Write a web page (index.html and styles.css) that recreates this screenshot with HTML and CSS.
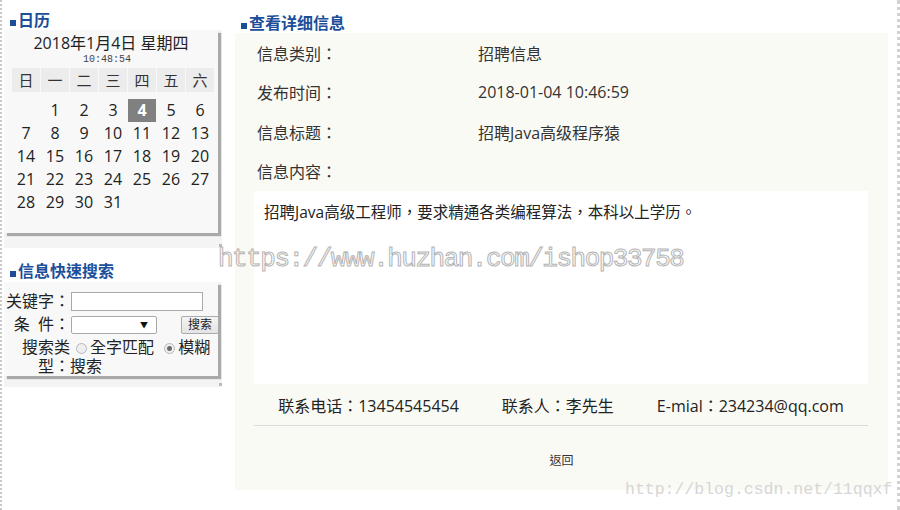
FILE: index.html
```html
<!DOCTYPE html>
<html lang="zh-CN">
<head>
    <meta charset="UTF-8">
    <title>查看详细信息</title>
    <link rel="stylesheet" href="styles.css">
</head>
<body>

<div class="page">

    <aside class="side">
        <h2 class="box-title">日历</h2>
        <div class="side-box cal-box">
            <div class="cal">
                <div class="cal-date">2018年1月4日 星期四</div>
                <div class="cal-time">10:48:54</div>
                <div class="cal-week">
                    <span>日</span><span>一</span><span>二</span><span>三</span><span>四</span><span>五</span><span>六</span>
                </div>
                <div class="cal-days">
                    <span></span><span>1</span><span>2</span><span>3</span><span class="today">4</span><span>5</span><span>6</span>
                    <span>7</span><span>8</span><span>9</span><span>10</span><span>11</span><span>12</span><span>13</span>
                    <span>14</span><span>15</span><span>16</span><span>17</span><span>18</span><span>19</span><span>20</span>
                    <span>21</span><span>22</span><span>23</span><span>24</span><span>25</span><span>26</span><span>27</span>
                    <span>28</span><span>29</span><span>30</span><span>31</span>
                </div>
            </div>
        </div>

        <h2 class="box-title search-title">信息快速搜索</h2>
        <div class="side-box search-box">
            <form class="search">
                <label class="search-label">关键字：</label>
                <div class="search-field"><input type="text" class="search-input"></div>

                <label class="search-label">条&nbsp;&nbsp;件：</label>
                <div class="search-field">
                    <span class="search-select"></span><button type="button" class="search-btn">搜索</button>
                </div>

                <label class="search-label search-label-wrap">搜索类<br>型：</label>
                <div class="search-field search-type">
                    <input type="radio" name="type" id="t1"><label for="t1">全字匹配</label>
                    <input type="radio" name="type" id="t2" checked><label for="t2">模糊搜索</label>
                </div>
            </form>
        </div>
    </aside>

    <main class="detail">
        <h2 class="box-title detail-title">查看详细信息</h2>
        <div class="detail-box">
            <div class="detail-row"><span>信息类别：</span><span>招聘信息</span></div>
            <div class="detail-row"><span>发布时间：</span><span>2018-01-04 10:46:59</span></div>
            <div class="detail-row"><span>信息标题：</span><span>招聘Java高级程序猿</span></div>
            <div class="detail-row"><span>信息内容：</span><span></span></div>

            <div class="detail-content">招聘Java高级工程师，要求精通各类编程算法，本科以上学历。</div>

            <div class="contact">
                <span>联系电话：13454545454</span>
                <span>联系人：李先生</span>
                <span>E-mial：234234@qq.com</span>
            </div>

            <div class="back"><a href="#">返回</a></div>
        </div>
    </main>

    <div class="mark-huzhan">https://www.huzhan.com/ishop33758</div>
    <div class="mark-csdn">http://blog.csdn.net/11qqxf</div>

</div>

</body>
</html>
```

FILE: styles.css
```css
body {
    margin: 0;
    font-family: "Open Sans", "Noto Sans CJK TC", sans-serif;
    font-feature-settings: "locl" 0;
    color: #333;
    background-color: #fff;
}

.page {
    position: relative;
    display: flex;
    height: 510px;
    box-sizing: border-box;
    border-left: 2px dotted #c8c8c8;
    border-right: 3px dotted #d2d2d2;
    overflow: hidden;
}

.box-title {
    margin: 0;
    padding-left: 6px;
    font-size: 16px;
    line-height: 20px;
    font-weight: bold;
    color: #1c4e9a;
}

.box-title::before {
    content: "";
    display: inline-block;
    width: 6px;
    height: 6px;
    margin-right: 2px;
    background-color: #1c4e9a;
    vertical-align: 0;
}

/* ---- left column ---- */

.side {
    width: 218px;
    padding-left: 2px;
    flex-shrink: 0;
}

.side > .box-title:first-child {
    margin-top: 10px;
}

.search-title {
    margin-top: 13px;
    margin-bottom: 1px;
}

.side-box {
    position: relative;
    background-color: #f4f4f4;
    padding: 0 4px 15px 0;
}

.side-box::after {
    content: "";
    position: absolute;
    right: 0;
    bottom: 1px;
    width: 3px;
    height: 3px;
    background-color: #bbb;
}

.search-box {
    padding-bottom: 11px;
}

.cal, .search {
    background-color: #f8f8f8;
    box-shadow: 3px 3px 1px #a9a9a9;
}

.cal {
    padding: 3px 0 19px 8px;
}

.cal-date {
    margin-left: -8px;
    font-size: 16px;
    line-height: 20px;
    text-align: center;
    color: #222;
}

.cal-time {
    margin-left: -16px;
    padding-top: 1px;
    font-family: "Liberation Mono", monospace;
    font-size: 10px;
    line-height: 12px;
    text-align: center;
    color: #444;
}

.cal-week, .cal-days {
    display: grid;
    grid-template-columns: repeat(7, 28px);
    column-gap: 1px;
    font-size: 16px;
    text-align: center;
}

.cal-week {
    margin-top: 2px;
    line-height: 24px;
}

.cal-week span {
    background-color: #ececec;
    font-size: 15px;
}

.cal-days {
    margin-top: 7px;
    grid-auto-rows: 23px;
    line-height: 23px;
    color: #222;
}

.cal-days .today {
    background-color: #808080;
    color: #fff;
    font-weight: bold;
}

/* search form */

.search {
    display: grid;
    grid-template-columns: 66px 1fr;
    grid-template-rows: 23px 23px auto;
    align-items: center;
    height: 94px;
    box-sizing: border-box;
    padding-top: 8px;
    font-size: 16px;
    color: #222;
}

.search-label {
    text-align: right;
    line-height: 23px;
    white-space: nowrap;
}

.search-label-wrap, .search-type {
    align-self: start;
    margin-top: 2px;
    line-height: 19px;
}

.search-field {
    display: flex;
    align-items: center;
}

.search-input {
    width: 132px;
    height: 19px;
    margin: 0 0 0 1px;
    padding: 0;
    box-sizing: border-box;
    border: 1px solid #a9a9a9;
    background-color: #fff;
}

.search-select {
    position: relative;
    width: 86px;
    height: 18px;
    margin-left: 1px;
    box-sizing: border-box;
    border: 1px solid #a9a9a9;
    border-radius: 2px;
    background-color: #fff;
}

.search-select::after {
    content: "▼";
    position: absolute;
    right: 8px;
    top: 3px;
    font-size: 8px;
    line-height: 10px;
    color: #111;
}

.search-btn {
    width: 38px;
    height: 18px;
    margin-left: 24px;
    padding: 0;
    font-family: inherit;
    font-size: 12px;
    line-height: 16px;
    color: #222;
    border: 1px solid #acacac;
    border-radius: 2px;
    background: linear-gradient(#f4f4f4, #e4e4e4);
}

.search-type {
    display: block;
}

.search-type input[type="radio"] {
    appearance: none;
    -webkit-appearance: none;
    width: 11px;
    height: 11px;
    margin: 0 3px 0 6px;
    border: 1px solid #b8b8b8;
    border-radius: 50%;
    background-color: #efefef;
    vertical-align: -1px;
}

.search-type input[type="radio"]:checked {
    background: radial-gradient(circle, #6b6b6b 0, #6b6b6b 2px, #efefef 3px);
}

/* ---- detail ---- */

.detail {
    width: 653px;
    margin-left: 13px;
    flex-shrink: 0;
}

.detail-title {
    margin-top: 13px;
}

.detail-box {
    height: 457px;
    background-color: #fafaf5;
}

.detail-row {
    display: grid;
    grid-template-columns: 221px 1fr;
    height: 39.5px;
    align-items: center;
    padding-left: 22px;
    font-size: 16px;
    color: #333;
}

.detail-content {
    height: 193px;
    margin: 0 20px 0 19px;
    padding: 10px;
    box-sizing: border-box;
    background-color: #fff;
    font-size: 15.5px;
    line-height: 22px;
    color: #222;
}

.contact {
    display: flex;
    justify-content: center;
    column-gap: 43px;
    margin: 0 20px 0 19px;
    padding: 11px 0 8px;
    font-size: 16px;
    line-height: 22px;
    color: #222;
    border-bottom: 1px solid #dcdcdc;
}

.back {
    margin-top: 27px;
    font-size: 12px;
    line-height: 16px;
    text-align: center;
}

.back a {
    color: #333;
    text-decoration: none;
}

/* watermarks */

.mark-huzhan {
    position: absolute;
    left: 216px;
    top: 244px;
    font-family: "Liberation Mono", monospace;
    font-size: 26px;
    line-height: 30px;
    letter-spacing: -1.5px;
    color: transparent;
    -webkit-text-stroke: 1px #b4b4b4;
    white-space: nowrap;
}

.mark-csdn {
    position: absolute;
    left: 623px;
    top: 480px;
    font-family: "Liberation Mono", monospace;
    font-size: 16.5px;
    line-height: 20px;
    color: #d6d6d6;
    white-space: nowrap;
}
```
